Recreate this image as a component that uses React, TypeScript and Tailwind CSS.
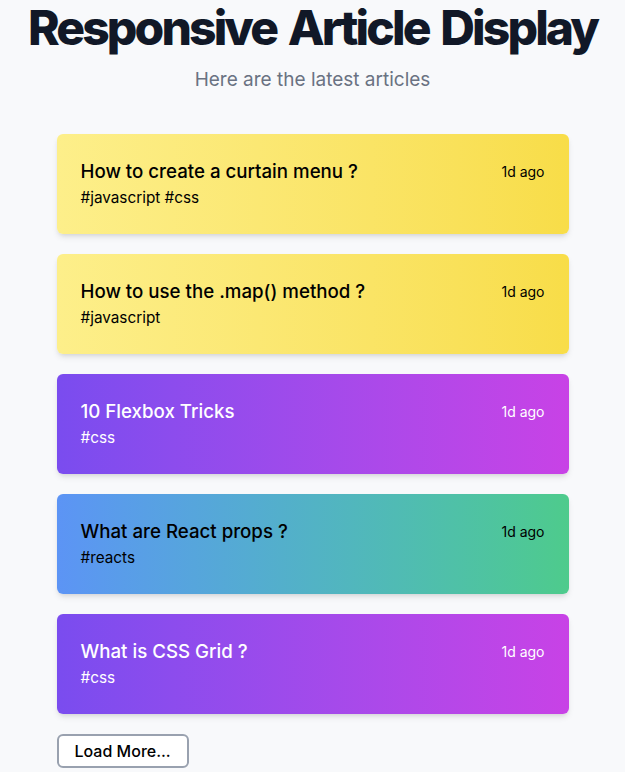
import React from "react";

type Article = {
  title: string;
  tags: string;
  tone: "yellow" | "purple" | "teal";
};

const articles: Article[] = [
  { title: "How to create a curtain menu ?", tags: "#javascript #css", tone: "yellow" },
  { title: "How to use the .map() method ?", tags: "#javascript", tone: "yellow" },
  { title: "10 Flexbox Tricks", tags: "#css", tone: "purple" },
  { title: "What are React props ?", tags: "#reacts", tone: "teal" },
  { title: "What is CSS Grid ?", tags: "#css", tone: "purple" },
];

const toneClass = {
  yellow: "bg-gradient-to-r from-[#fdef8a] to-[#f8dd48] text-black",
  purple: "bg-gradient-to-r from-[#7a4cef] to-[#c842e6] text-white",
  teal: "bg-gradient-to-r from-[#5c94f5] to-[#4ecb8c] text-black",
};

const ArticleCard = ({ title, tags, tone }: Article) => {
  return (
    <div className={`${toneClass[tone]} rounded-md shadow-md px-6 py-6 flex justify-between`}>
      <div className="flex flex-col">
        <h2 className="text-[18.7px] leading-7 font-medium">{title}</h2>
        <p className="text-[15.3px] leading-6">{tags}</p>
      </div>
      <span className="text-sm leading-7">1d ago</span>
    </div>
  );
};

export default function App() {
  return (
    <div
      className="min-h-screen bg-[#f8f9fb] flex flex-col items-center"
      style={{ fontFamily: "Inter, 'Noto Sans', sans-serif" }}
    >
      <h1 className="text-5xl leading-[56px] font-extrabold tracking-[-0.06em] [word-spacing:4px] whitespace-nowrap text-[#111827]">
        Responsive Article Display
      </h1>
      <p className="mt-[10px] text-[19px] leading-7 text-gray-500">Here are the latest articles</p>
      <div className="w-[512px] mt-[40px] flex flex-col gap-5">
        {articles.map((a) => (
          <ArticleCard key={a.title} {...a} />
        ))}
        <div>
          <button
            type="button"
            className="border-2 border-gray-400 rounded-md bg-white px-4 py-[3px] text-base leading-6 font-medium text-black"
          >
            Load More...
          </button>
        </div>
      </div>
    </div>
  );
}
